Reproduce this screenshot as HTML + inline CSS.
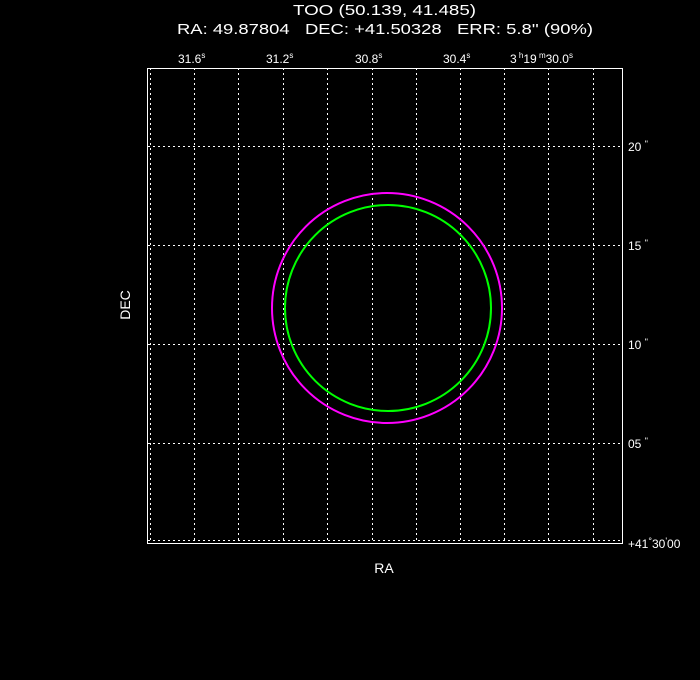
<!DOCTYPE html>
<html><head><style>body{margin:0;background:#000}svg{display:block}text{white-space:pre}</style></head><body>
<svg width="700" height="680" xmlns="http://www.w3.org/2000/svg" font-family="Liberation Sans, sans-serif" fill="#fff">
<rect width="700" height="680" fill="#000"/>
<text x="293" y="15" font-size="15" textLength="183" lengthAdjust="spacingAndGlyphs">TOO (50.139, 41.485)</text>
<text x="177" y="34" font-size="15" textLength="416" lengthAdjust="spacingAndGlyphs">RA: 49.87804   DEC: +41.50328   ERR: 5.8'' (90%)</text>
<g font-size="12">
<text x="178" y="63">31.6<tspan font-size="8" dy="-5">s</tspan></text>
<text x="266" y="63">31.2<tspan font-size="8" dy="-5">s</tspan></text>
<text x="355" y="63">30.8<tspan font-size="8" dy="-5">s</tspan></text>
<text x="443" y="63">30.4<tspan font-size="8" dy="-5">s</tspan></text>
<text x="510" y="63">3<tspan font-size="8" dy="-5"> h</tspan><tspan dy="5">19</tspan><tspan font-size="8" dy="-5"> m</tspan><tspan dy="5">30.0</tspan><tspan font-size="8" dy="-5">s</tspan></text>
<text x="628" y="151">20 <tspan font-size="9" dy="-4">"</tspan></text>
<text x="628" y="250">15 <tspan font-size="9" dy="-4">"</tspan></text>
<text x="628" y="349">10 <tspan font-size="9" dy="-4">"</tspan></text>
<text x="628" y="448">05 <tspan font-size="9" dy="-4">"</tspan></text>
<text x="628" y="548">+41<tspan font-size="9" dy="-4">°</tspan><tspan dy="4">30</tspan><tspan font-size="9" dy="-4">'</tspan><tspan dy="4">00</tspan></text>
</g>
<text x="384" y="573" font-size="14" text-anchor="middle">RA</text>
<text transform="translate(130,305) rotate(-90)" font-size="14" text-anchor="middle">DEC</text>
<g stroke="#fff" stroke-width="1" stroke-dasharray="2,3" fill="none">
<path d="M150.5 68V542M194.5 68V542M238.5 68V542M283.5 68V542M327.5 68V542M372.5 68V542M416.5 68V542M460.5 68V542M504.5 68V542M548.5 68V542M593.5 68V542"/>
<path d="M148 146.5H622M148 245.5H622M148 344.5H622M148 443.5H622M148 540.5H622"/>
</g>
<rect x="147.5" y="68.5" width="475" height="475" fill="none" stroke="#fff"/>
<circle cx="387" cy="308" r="115" fill="none" stroke="#f0f" stroke-width="2"/>
<circle cx="388" cy="308" r="103" fill="none" stroke="#0f0" stroke-width="2"/>
</svg>
</body></html>
